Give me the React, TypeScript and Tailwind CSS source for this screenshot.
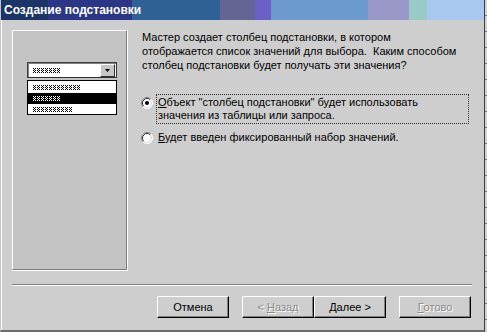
import React from "react";

const titleBg =
  "bg-[linear-gradient(to_right,#1b3568_0px,#1b3568_47px,#2b3786_47px,#2b3786_131px,#2f6096_131px,#2f6096_219px,#656595_219px,#656595_254px,#6a60c8_254px,#6a60c8_270px,#6a9ace_270px,#6a9ace_367px,#9a98c8_367px,#9a98c8_408px,#98cac8_408px,#98cac8_426px,#a8c8f0_426px,#a8c8f0_100%)]";

// placeholder "text" drawn in the little preview: bitmap-ish x glyphs
function Hatch({ count, color = "#000" }: { count: number; color?: string }) {
  const w = count * 4;
  const cells: React.ReactNode[] = [];
  for (let i = 0; i < count; i++) {
    const x = i * 4;
    const pts = [
      [0, 0], [2, 0],
      [1, 1],
      [0, 2], [2, 2],
      [1, 3],
      [0, 4], [2, 4],
    ];
    pts.forEach(([dx, dy], k) =>
      cells.push(<rect key={`${i}-${k}`} x={x + dx} y={dy} width={1} height={1} fill={color} />)
    );
  }
  return (
    <svg width={w} height={5} viewBox={`0 0 ${w} 5`} shapeRendering="crispEdges">
      {cells}
    </svg>
  );
}

function Radio({ checked }: { checked?: boolean }) {
  return (
    <svg width="12" height="12" viewBox="0 0 12 12" className="shrink-0">
      <circle cx="6" cy="6" r="5.5" fill="#fff" />
      <path d="M2.11 9.89 A5.5 5.5 0 0 1 9.89 2.11" stroke="#808080" fill="none" />
      <path d="M9.89 2.11 A5.5 5.5 0 0 1 2.11 9.89" stroke="#ffffff" fill="none" />
      <path d="M2.82 9.18 A4.5 4.5 0 0 1 9.18 2.82" stroke="#303030" fill="none" />
      <path d="M9.18 2.82 A4.5 4.5 0 0 1 2.82 9.18" stroke="#d8d8d8" fill="none" />
      {checked && <circle cx="6" cy="6" r="2" fill="#000" />}
    </svg>
  );
}

function WizButton({
  children,
  disabled,
  className = "",
}: {
  children: React.ReactNode;
  disabled?: boolean;
  className?: string;
}) {
  return (
    <div
      className={`w-[72px] h-[22px] flex items-center justify-center border border-t-white border-l-white border-r-black border-b-black shadow-[inset_-1px_-1px_0_#808080] text-[11px] ${
        disabled ? "text-[#8a8a8a] [text-shadow:1px_1px_0_#ffffff]" : "text-black"
      } ${className}`}
    >
      {children}
    </div>
  );
}

export default function App() {
  return (
    <div className="flex w-[487px] h-[332px] bg-[#e2e2e2] font-[Liberation_Sans,Arial,sans-serif] overflow-hidden">
      <div className="flex flex-col w-[485px] h-[332px] shrink-0 bg-[#cecece] border-l border-l-[#c4c4c4] border-r border-r-[#3c3c3c] border-b-2 border-b-[#6c6c6c] shadow-[inset_1px_0_0_#ffffff]">
        <div className={`h-[20px] shrink-0 flex items-center pl-[3px] ${titleBg}`}>
          <span className="text-white font-bold text-[12px] leading-none">Создание подстановки</span>
        </div>

        <div className="flex pl-[11px] pt-[10px]">
          <div className="border-r border-b border-white shrink-0">
            <div className="w-[115px] h-[240px] bg-[#c3c3c3] border-t border-l border-t-white border-l-white border-r border-b border-r-[#7c7c7c] border-b-[#7c7c7c] pl-[14px] pt-[31px]">
              <div className="w-[90px] h-[16px] flex items-center bg-white border-t border-l border-t-[#404040] border-l-[#404040] border-r border-b border-r-[#303030] border-b-[#303030] shadow-[inset_1px_1px_0_#808080]">
                <div className="flex-1 pl-[5px] flex items-center">
                  <Hatch count={7} />
                </div>
                <div className="w-[15px] h-[13px] mr-[1px] bg-[#c6c6c6] border border-t-white border-l-white border-r-[#303030] border-b-[#303030] flex items-center justify-center">
                  <svg width="5" height="3" viewBox="0 0 5 3">
                    <path d="M0 0h5l-2.5 3z" fill="#000" />
                  </svg>
                </div>
              </div>
              <div className="w-[90px] mt-[2px] h-[35px] bg-white border border-black pt-[1px]">
                <div className="h-[11px] pl-[5px] flex items-center">
                  <Hatch count={12} />
                </div>
                <div className="h-[11px] pl-[5px] flex items-center bg-black">
                  <Hatch count={7} color="#fff" />
                </div>
                <div className="h-[11px] pl-[5px] flex items-center">
                  <Hatch count={10} />
                </div>
              </div>
            </div>
          </div>

          <div className="ml-[14px] flex-1 text-[11px] text-black">
            <p className="leading-[14px]">
              Мастер создает столбец подстановки, в котором
              <br />
              отображается список значений для выбора.&nbsp; Каким способом
              <br />
              столбец подстановки будет получать эти значения?
            </p>
            <div className="mt-[22px] flex items-start">
              <div className="mt-[3px] -ml-[1px]">
                <Radio checked />
              </div>
              <div className="ml-[3px] w-[313px] border border-dotted border-[#303030] px-[1px] py-[1px] leading-[13px]">
                <span className="underline">О</span>бъект "столбец подстановки" будет использовать
                <br />
                значения из таблицы или запроса.
              </div>
            </div>
            <div className="mt-[5px] flex items-start">
              <div className="mt-[3px] -ml-[1px]">
                <Radio />
              </div>
              <div className="ml-[3px] border border-transparent px-[1px] py-[1px] leading-[13px]">
                <span className="underline">Б</span>удет введен фиксированный набор значений.
              </div>
            </div>
          </div>
        </div>

        <div className="mt-[13px] ml-[11px] mr-[12px] border-t border-t-[#808080] border-b border-b-white" />

        <div className="mt-[10px] flex pl-[156px]">
          <WizButton>Отмена</WizButton>
          <WizButton disabled className="ml-[13px]">
            &lt; <span className="underline ml-[3px]">Н</span>азад
          </WizButton>
          <WizButton>
            <span className="underline">Д</span>алее &gt;
          </WizButton>
          <WizButton disabled className="ml-[13px]">
            <span className="underline">Г</span>отово
          </WizButton>
        </div>
      </div>
      <div className="flex-1 h-full bg-[repeating-linear-gradient(to_bottom,#d4d4d4_0px,#d4d4d4_15px,#7a7a7a_15px,#7a7a7a_16px)]" />
    </div>
  );
}
